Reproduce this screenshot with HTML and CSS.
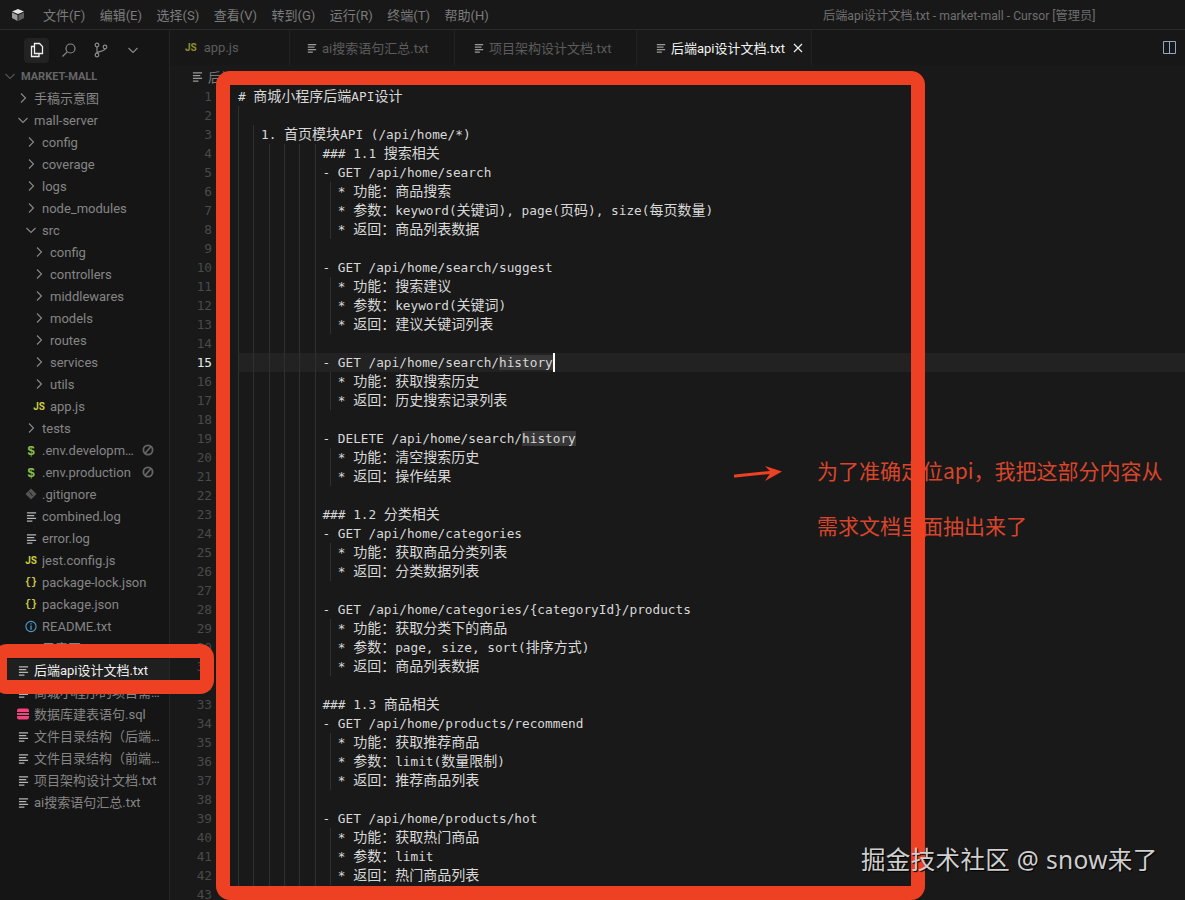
FILE: index.html
```html
<!DOCTYPE html>
<html lang="zh-CN">
<head>
<meta charset="utf-8">
<title>后端api设计文档.txt - market-mall - Cursor</title>
<link rel="stylesheet" href="styles.css">
</head>
<body>
<svg class="defs" aria-hidden="true">
  <symbol id="f" viewBox="0 0 12 12"><path d="M1 2h10M1 5h8M1 8h10M1 11h6" fill="none" stroke="currentColor" stroke-width="1.5"/></symbol>
  <symbol id="cr" viewBox="0 0 12 12"><path d="M4 1.5 8.5 6 4 10.5" fill="none" stroke="currentColor" stroke-width="1.1"/></symbol>
  <symbol id="cd" viewBox="0 0 12 12"><path d="M1.5 4 6 8.5 10.5 4" fill="none" stroke="currentColor" stroke-width="1.1"/></symbol>
  <symbol id="no" viewBox="0 0 12 12"><circle cx="6" cy="6" r="4.6" fill="none" stroke="currentColor" stroke-width="1.8"/><path d="M3 9.5 9 2.5" stroke="currentColor" stroke-width="1.8"/></symbol>
</svg>

<header class="titlebar">
  <svg class="logo" width="14" height="14" viewBox="0 0 14 14"><path d="M1 3.5 7 1l6 2.5L7 6z" fill="#e4e4e4"/><path d="M1 4.5 6.5 7v6L1 10z" fill="#9a9a9a"/><path d="M13 4.5 7.5 7v6l5.5-3z" fill="#5e5e5e"/></svg>
  <nav class="menu">
    <span>文件(F)</span><span>编辑(E)</span><span>选择(S)</span><span>查看(V)</span><span>转到(G)</span><span>运行(R)</span><span>终端(T)</span><span>帮助(H)</span>
  </nav>
  <div class="wintitle">后端api设计文档.txt - market-mall - Cursor [管理员]</div>
</header>

<div class="main">
  <aside class="sidebar">
    <div class="activity">
      <span class="act on"><svg width="16" height="16" viewBox="0 0 16 16"><path d="M5.5 1.5h5l3 3v7h-8z" fill="none" stroke="#eee" stroke-width="1.3"/><path d="M5 4.500H2.500v10H10V12" fill="none" stroke="#eee" stroke-width="1.3"/></svg></span>
      <span class="act"><svg width="16" height="16" viewBox="0 0 16 16"><circle cx="9.500" cy="6.500" r="4.500" fill="none" stroke="#8a8a8a" stroke-width="1.200"/><path d="M6.200 9.800 1.500 14.500" stroke="#8a8a8a" stroke-width="1.200"/></svg></span>
      <span class="act"><svg width="16" height="16" viewBox="0 0 16 16"><g fill="none" stroke="#8a8a8a" stroke-width="1.200"><circle cx="4" cy="3" r="1.800"/><circle cx="4" cy="13" r="1.800"/><circle cx="12" cy="5" r="1.800"/><path d="M4 4.800v6.400M12 6.800c0 3-8 2-8 4.400"/></g></svg></span>
      <span class="act"><svg class="ic" width="12" height="12"><use href="#cd"/></svg></span>
    </div>
    <div class="root"><svg class="ic" width="12" height="12"><use href="#cd"/></svg><span>MARKET-MALL</span></div>
    <ul class="tree">
      <li class="row l1"><span class="slot"><svg width="12" height="12"><use href="#cr"/></svg></span><span class="label">手稿示意图</span></li>
      <li class="row l1"><span class="slot"><svg width="12" height="12"><use href="#cd"/></svg></span><span class="label">mall-server</span></li>
      <li class="row l2"><span class="slot"><svg width="12" height="12"><use href="#cr"/></svg></span><span class="label">config</span></li>
      <li class="row l2"><span class="slot"><svg width="12" height="12"><use href="#cr"/></svg></span><span class="label">coverage</span></li>
      <li class="row l2"><span class="slot"><svg width="12" height="12"><use href="#cr"/></svg></span><span class="label">logs</span></li>
      <li class="row l2"><span class="slot"><svg width="12" height="12"><use href="#cr"/></svg></span><span class="label">node_modules</span></li>
      <li class="row l2"><span class="slot"><svg width="12" height="12"><use href="#cd"/></svg></span><span class="label">src</span></li>
      <li class="row l3"><span class="slot"><svg width="12" height="12"><use href="#cr"/></svg></span><span class="label">config</span></li>
      <li class="row l3"><span class="slot"><svg width="12" height="12"><use href="#cr"/></svg></span><span class="label">controllers</span></li>
      <li class="row l3"><span class="slot"><svg width="12" height="12"><use href="#cr"/></svg></span><span class="label">middlewares</span></li>
      <li class="row l3"><span class="slot"><svg width="12" height="12"><use href="#cr"/></svg></span><span class="label">models</span></li>
      <li class="row l3"><span class="slot"><svg width="12" height="12"><use href="#cr"/></svg></span><span class="label">routes</span></li>
      <li class="row l3"><span class="slot"><svg width="12" height="12"><use href="#cr"/></svg></span><span class="label">services</span></li>
      <li class="row l3"><span class="slot"><svg width="12" height="12"><use href="#cr"/></svg></span><span class="label">utils</span></li>
      <li class="row l3"><span class="slot js">JS</span><span class="label">app.js</span></li>
      <li class="row l2"><span class="slot"><svg width="12" height="12"><use href="#cr"/></svg></span><span class="label">tests</span></li>
      <li class="row l2"><span class="slot env">$</span><span class="label">.env.development</span><svg class="block" width="12" height="12"><use href="#no"/></svg></li>
      <li class="row l2"><span class="slot env">$</span><span class="label">.env.production</span><svg class="block" width="12" height="12"><use href="#no"/></svg></li>
      <li class="row l2"><span class="slot"><svg width="12" height="12" viewBox="0 0 12 12"><path d="M6 .5 11.500 6 6 11.500.5 6z" fill="#555"/><path d="M4.500 4 7.500 8" stroke="#1a1a1a"/></svg></span><span class="label">.gitignore</span></li>
      <li class="row l2"><span class="slot doc"><svg width="11" height="11"><use href="#f"/></svg></span><span class="label">combined.log</span></li>
      <li class="row l2"><span class="slot doc"><svg width="11" height="11"><use href="#f"/></svg></span><span class="label">error.log</span></li>
      <li class="row l2"><span class="slot js">JS</span><span class="label">jest.config.js</span></li>
      <li class="row l2"><span class="slot json">{}</span><span class="label">package-lock.json</span></li>
      <li class="row l2"><span class="slot json">{}</span><span class="label">package.json</span></li>
      <li class="row l2"><span class="slot"><svg width="13" height="13" viewBox="0 0 13 13"><circle cx="6.500" cy="6.500" r="5.500" fill="none" stroke="#4b9cc9" stroke-width="1.200"/><path d="M6.500 5.500v4.500M6.500 3v1.400" stroke="#4b9cc9" stroke-width="1.400"/></svg></span><span class="label">README.txt</span></li>
      <li class="row l2"><span class="slot doc"><svg width="11" height="11"><use href="#f"/></svg></span><span class="label">示意图</span></li>
      <li class="row l1 sel"><span class="slot doc"><svg width="11" height="11"><use href="#f"/></svg></span><span class="label">后端api设计文档.txt</span></li>
      <li class="row l1"><span class="slot doc"><svg width="11" height="11"><use href="#f"/></svg></span><span class="label">商城小程序的项目需求文档.txt</span></li>
      <li class="row l1"><span class="slot"><svg width="12" height="12" viewBox="0 0 12 12"><path d="M0 2.500Q0 .5 2 .5h8q2 0 2 2v1.500H0zM0 5h12v2H0zM0 8h12v1.500q0 2-2 2H2q-2 0-2-2z" fill="#f0427c"/></svg></span><span class="label">数据库建表语句.sql</span></li>
      <li class="row l1"><span class="slot doc"><svg width="11" height="11"><use href="#f"/></svg></span><span class="label">文件目录结构（后端部分）.txt</span></li>
      <li class="row l1"><span class="slot doc"><svg width="11" height="11"><use href="#f"/></svg></span><span class="label">文件目录结构（前端部分）.txt</span></li>
      <li class="row l1"><span class="slot doc"><svg width="11" height="11"><use href="#f"/></svg></span><span class="label">项目架构设计文档.txt</span></li>
      <li class="row l1"><span class="slot doc"><svg width="11" height="11"><use href="#f"/></svg></span><span class="label">ai搜索语句汇总.txt</span></li>
    </ul>
  </aside>

  <section class="workspace">
    <div class="tabs">
      <div class="tab t1"><span class="js">JS</span><span>app.js</span></div>
      <div class="tab t2"><svg class="tic" width="10" height="10"><use href="#f"/></svg><span>ai搜索语句汇总.txt</span></div>
      <div class="tab t3"><svg class="tic" width="10" height="10"><use href="#f"/></svg><span>项目架构设计文档.txt</span></div>
      <div class="tab t4 active"><svg class="tic" width="10" height="10"><use href="#f"/></svg><span>后端api设计文档.txt</span><svg class="close" width="10" height="10" viewBox="0 0 10 10"><path d="M1 1l8 8M9 1l-8 8" stroke="#eee" stroke-width="1.200"/></svg></div>
      <svg class="split" width="13" height="13" viewBox="0 0 13 13"><path d="M.5.5h12v12H.5zM6.500.5v12" fill="none" stroke="#8fa8c8"/></svg>
    </div>
    <div class="crumb"><svg class="tic" width="11" height="11"><use href="#f"/></svg><span>后端api设计文档.txt</span></div>
    <div class="code">
      <div class="ln"><span class="num">1</span><span class="txt"># <i>商城小程序后端</i>API<i>设计</i></span></div>
      <div class="ln"><span class="num">2</span><span class="txt g1"></span></div>
      <div class="ln"><span class="num">3</span><span class="txt g2">   1. <i>首页模块</i>API (/api/home/*)</span></div>
      <div class="ln"><span class="num">4</span><span class="txt g6">           ### 1.1 <i>搜索相关</i></span></div>
      <div class="ln"><span class="num">5</span><span class="txt g6">           - GET /api/home/search</span></div>
      <div class="ln"><span class="num">6</span><span class="txt g7">             * <i>功能：商品搜索</i></span></div>
      <div class="ln"><span class="num">7</span><span class="txt g7">             * <i>参数：</i>keyword(<i>关键词</i>), page(<i>页码</i>), size(<i>每页数量</i>)</span></div>
      <div class="ln"><span class="num">8</span><span class="txt g7">             * <i>返回：商品列表数据</i></span></div>
      <div class="ln"><span class="num">9</span><span class="txt g6"></span></div>
      <div class="ln"><span class="num">10</span><span class="txt g6">           - GET /api/home/search/suggest</span></div>
      <div class="ln"><span class="num">11</span><span class="txt g7">             * <i>功能：搜索建议</i></span></div>
      <div class="ln"><span class="num">12</span><span class="txt g7">             * <i>参数：</i>keyword(<i>关键词</i>)</span></div>
      <div class="ln"><span class="num">13</span><span class="txt g7">             * <i>返回：建议关键词列表</i></span></div>
      <div class="ln"><span class="num">14</span><span class="txt g6"></span></div>
      <div class="ln cur"><span class="num">15</span><span class="txt g6">           - GET /api/home/search/<mark>history</mark><b class="caret"></b></span></div>
      <div class="ln"><span class="num">16</span><span class="txt g7">             * <i>功能：获取搜索历史</i></span></div>
      <div class="ln"><span class="num">17</span><span class="txt g7">             * <i>返回：历史搜索记录列表</i></span></div>
      <div class="ln"><span class="num">18</span><span class="txt g6"></span></div>
      <div class="ln"><span class="num">19</span><span class="txt g6">           - DELETE /api/home/search/<mark>history</mark></span></div>
      <div class="ln"><span class="num">20</span><span class="txt g7">             * <i>功能：清空搜索历史</i></span></div>
      <div class="ln"><span class="num">21</span><span class="txt g7">             * <i>返回：操作结果</i></span></div>
      <div class="ln"><span class="num">22</span><span class="txt g6"></span></div>
      <div class="ln"><span class="num">23</span><span class="txt g6">           ### 1.2 <i>分类相关</i></span></div>
      <div class="ln"><span class="num">24</span><span class="txt g6">           - GET /api/home/categories</span></div>
      <div class="ln"><span class="num">25</span><span class="txt g7">             * <i>功能：获取商品分类列表</i></span></div>
      <div class="ln"><span class="num">26</span><span class="txt g7">             * <i>返回：分类数据列表</i></span></div>
      <div class="ln"><span class="num">27</span><span class="txt g6"></span></div>
      <div class="ln"><span class="num">28</span><span class="txt g6">           - GET /api/home/categories/{categoryId}/products</span></div>
      <div class="ln"><span class="num">29</span><span class="txt g7">             * <i>功能：获取分类下的商品</i></span></div>
      <div class="ln"><span class="num">30</span><span class="txt g7">             * <i>参数：</i>page, size, sort(<i>排序方式</i>)</span></div>
      <div class="ln"><span class="num">31</span><span class="txt g7">             * <i>返回：商品列表数据</i></span></div>
      <div class="ln"><span class="num">32</span><span class="txt g6"></span></div>
      <div class="ln"><span class="num">33</span><span class="txt g6">           ### 1.3 <i>商品相关</i></span></div>
      <div class="ln"><span class="num">34</span><span class="txt g6">           - GET /api/home/products/recommend</span></div>
      <div class="ln"><span class="num">35</span><span class="txt g7">             * <i>功能：获取推荐商品</i></span></div>
      <div class="ln"><span class="num">36</span><span class="txt g7">             * <i>参数：</i>limit(<i>数量限制</i>)</span></div>
      <div class="ln"><span class="num">37</span><span class="txt g7">             * <i>返回：推荐商品列表</i></span></div>
      <div class="ln"><span class="num">38</span><span class="txt g6"></span></div>
      <div class="ln"><span class="num">39</span><span class="txt g6">           - GET /api/home/products/hot</span></div>
      <div class="ln"><span class="num">40</span><span class="txt g7">             * <i>功能：获取热门商品</i></span></div>
      <div class="ln"><span class="num">41</span><span class="txt g7">             * <i>参数：</i>limit</span></div>
      <div class="ln"><span class="num">42</span><span class="txt g7">             * <i>返回：热门商品列表</i></span></div>
      <div class="ln"><span class="num">43</span><span class="txt g6"></span></div>
    </div>
  </section>
</div>

<p class="note n1">为了准确定位api，我把这部分内容从</p>
<p class="note n2">需求文档里面抽出来了</p>
<svg class="arrow" width="50" height="20" viewBox="0 0 50 20"><path d="M1 12 41 8" stroke="#ee4123" stroke-width="3" stroke-linecap="round"/><path d="M31 2 48 7.500 31 17 37 8z" fill="#ee4123"/></svg>
<div class="frame big"></div>
<div class="frame small"></div>
<div class="watermark">掘金技术社区 @ snow来了</div>
</body>
</html>
```

FILE: styles.css
```css
* { box-sizing: border-box; }
html, body { margin: 0; height: 900px; overflow: hidden; }
body {
  position: relative;
  background: #191919;
  color: #858585;
  font-family: Roboto, "Noto Sans CJK SC", sans-serif;
  font-size: 13px;
}
.defs { display: none; }

.titlebar {
  height: 30px;
  display: flex;
  align-items: center;
  background: #181818;
  border-bottom: 1px solid #2b2b2b;
  padding-left: 11px;
}
.logo { flex: none; }
.menu { display: flex; gap: 14.500px; margin-left: 18px; font-size: 13px; color: #7c7c7c; }
.wintitle { position: absolute; left: 823px; top: 6px; font-size: 12.200px; color: #6f6f6f; white-space: nowrap; }

.main { display: flex; height: 870px; }

.sidebar { width: 170px; flex: none; background: #151515; border-right: 1px solid #262626; overflow: hidden; }
.activity { height: 35px; display: flex; align-items: center; padding: 5px 0 0 24px; gap: 7px; }
.act { width: 25px; height: 25px; display: flex; align-items: center; justify-content: center; border-radius: 4px; }
.act.on { background: #222; }
.ic { color: #8a8a8a; }
.root { height: 22px; display: flex; align-items: center; gap: 5px; padding-left: 4px; font-size: 11px; font-weight: 700; color: #666; }
.root .ic { color: #555; }
.tree { list-style: none; margin: 0; padding: 0; }
.row { height: 22px; display: flex; align-items: center; gap: 5px; padding-right: 9px; white-space: nowrap; }
.l1 { padding-left: 17px; }
.l2 { padding-left: 25px; }
.l3 { padding-left: 33px; }
.slot { width: 12px; flex: none; display: flex; align-items: center; justify-content: center; color: #8a8a8a; }
.label { flex: 1; min-width: 0; height: 22px; line-height: 22px; padding-top: 1px; overflow: hidden; text-overflow: ellipsis; }
.doc { color: #b5b5b5; }
.js { font-size: 10px; font-weight: 700; color: #cbcb41; }
.env { font-size: 13px; font-weight: 700; color: #8dc149; font-family: "Liberation Sans", sans-serif; }
.json { font-size: 10px; font-weight: 700; color: #cbcb41; font-family: "Liberation Mono", monospace; }
.block { flex: none; color: #666; margin-right: 6px; }
.sel { background: #1f1f1f; color: #f0f0f0; }

.workspace { flex: 1; min-width: 0; display: flex; flex-direction: column; }
.tabs { height: 35px; display: flex; align-items: stretch; position: relative; background: #171717; }
.tab { display: flex; align-items: center; border-right: 1px solid #222; color: #5c5c5c; font-size: 13px; gap: 5px; white-space: nowrap; }
.t1 { width: 120px; padding-left: 15px; gap: 7px; }
.t1 .js { color: #8f8f30; }
.t2 { width: 165px; padding-left: 17px; }
.t3 { width: 182px; padding-left: 19px; }
.t4 { width: 175px; padding-left: 19px; }
.active { background: #191919; color: #f2f2f2; }
.tic { color: #9a9a9a; flex: none; }
.close { margin-left: 3px; }
.split { position: absolute; right: 9px; top: 11px; }
.crumb { height: 22px; display: flex; align-items: center; gap: 5px; padding-left: 22px; font-size: 13px; color: #7a7a7a; }

.code { flex: 1; overflow: hidden; }
.ln { display: flex; height: 19px; line-height: 19px; font-family: "DejaVu Sans Mono", "Noto Sans CJK SC", monospace; font-size: 12.750px; }
.num { width: 42px; flex: none; text-align: right; color: #4a4a4a; }
.txt { flex: 1; position: relative; margin-left: 26px; white-space: pre; color: #d8d8d8; }
.txt i { font-style: normal; font-family: "Noto Sans CJK SC", sans-serif; font-size: 14px; line-height: 0; }
.txt::before {
  content: "";
  position: absolute;
  left: 0; top: 0; bottom: 0;
  background: repeating-linear-gradient(90deg, #303030 0, #303030 1px, transparent 1px, transparent 15.340px);
}
.g1::before { width: 2px; }
.g2::before { width: 17px; }
.g6::before { width: 78px; }
.g7::before { width: 93px; }
.cur .num { color: #e8e8e8; }
.cur .txt { background: #222; }
mark { background: #373737; color: inherit; }
.caret { display: inline-block; width: 2px; height: 19px; background: #fff; vertical-align: top; }

.note { position: absolute; left: 817px; margin: 0; font-size: 21px; line-height: 30px; color: #d9452b; white-space: nowrap; font-family: "Noto Sans CJK SC", sans-serif; }
.n1 { top: 455px; }
.n2 { top: 510px; }
.arrow { position: absolute; left: 734px; top: 464px; }
.frame { position: absolute; border: 14px solid #ee4123; border-radius: 14px; }
.big { left: 216px; top: 71px; width: 709px; height: 829px; }
.small { left: -7px; top: 644px; width: 221px; height: 50px; }
.watermark {
  position: absolute;
  left: 861px;
  top: 843px;
  font-size: 24.500px;
  line-height: 34px;
  letter-spacing: .35px;
  color: #cfcfcf;
  white-space: nowrap;
  text-shadow: 1px 1px 1px #000;
  font-family: "Noto Sans", "Noto Sans CJK SC", sans-serif;
}
```
